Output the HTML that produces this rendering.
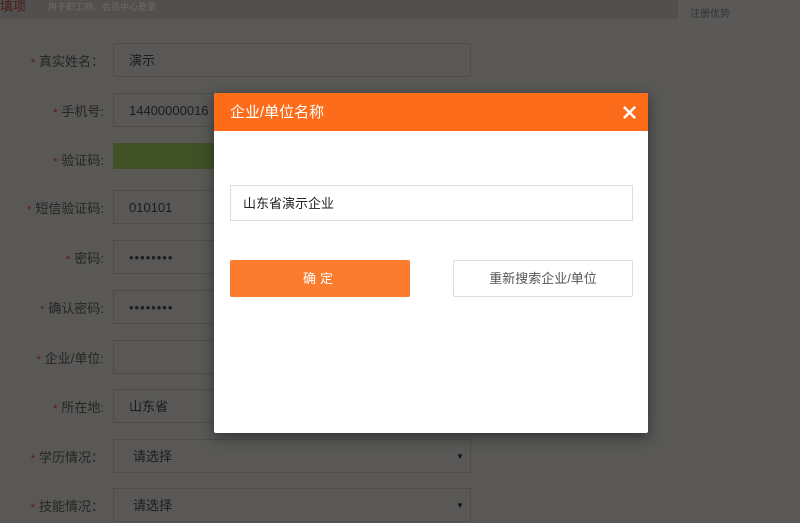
<!DOCTYPE html>
<html><head><meta charset="utf-8"><style>
*{margin:0;padding:0;box-sizing:border-box}
body{width:800px;height:521px;overflow:hidden;background:#595856;font-family:"Liberation Sans","Noto Sans CJK SC",sans-serif;position:relative}
.top{position:absolute;left:0;top:0;width:678px;height:19px;background:#52504e}
.side{position:absolute;left:678px;top:0;width:122px;height:521px;background:#5b5957}
.side span{position:absolute;left:12px;top:5px;font-size:10px;color:#333}
.t1{position:absolute;left:0;top:-4px;font-size:13px;color:#4a1c1c}
.t2{position:absolute;left:48px;top:0;font-size:9px;color:#6e6c6a}
.lab{position:absolute;right:696px;font-size:13px;color:#262524;text-align:right;white-space:nowrap}
.lab b{color:#5a1a1a;font-weight:normal;margin-right:4px;font-size:11px}
.in{position:absolute;left:113px;width:358px;height:34px;border:1px solid #4e4c4a;font-size:13px;color:#1c1c1c;padding:0 0 0 15px;line-height:34px}
.in i{position:absolute;right:6px;top:0;font-style:normal;font-size:8px;color:#111}
.modal{position:absolute;left:214px;top:93px;width:434px;height:340px;background:#fff;box-shadow:0 4px 14px rgba(0,0,0,.45);border-radius:2px}
.hd{height:38px;background:#fd6c1a;color:#fff;font-size:15px;line-height:40px;padding-left:16px;position:relative;border-radius:2px 2px 0 0}
.x{position:absolute;right:11px;top:12px;width:15px;height:15px}
.mi{position:absolute;left:16px;top:92px;width:403px;height:36px;border:1px solid #ddd;font-size:13px;color:#222;line-height:36px;padding-left:12px}
.b1{position:absolute;left:16px;top:167px;width:180px;height:37px;background:#fc7c2f;border-radius:2px;color:#fff;font-size:13px;text-align:center;line-height:37px;letter-spacing:4px}
.b2{position:absolute;left:239px;top:167px;width:180px;height:37px;border:1px solid #ddd;border-radius:2px;color:#555;font-size:13px;text-align:center;line-height:35px}
</style></head><body>
<div class="top"><span class="t1">填项</span><span class="t2">用于职工网、会员中心登录</span></div>
<div class="side"><span>注册优势</span></div>
<div class="lab" style="top:51px"><b>*</b>真实姓名：</div><div class="in" style="top:43px">演示</div>
<div class="lab" style="top:101px"><b>*</b>手机号:</div><div class="in" style="top:93px">14400000016</div>
<div class="lab" style="top:150px"><b>*</b>验证码:</div><div class="in" style="top:143px;height:26px;background:#3f5125;border-color:#3f5125;width:110px"></div>
<div class="lab" style="top:198px"><b>*</b>短信验证码:</div><div class="in" style="top:190px">010101</div>
<div class="lab" style="top:248px"><b>*</b>密码:</div><div class="in" style="top:240px;letter-spacing:1px">••••••••</div>
<div class="lab" style="top:298px"><b>*</b>确认密码:</div><div class="in" style="top:290px;letter-spacing:1px">••••••••</div>
<div class="lab" style="top:348px"><b>*</b>企业/单位:</div><div class="in" style="top:340px"></div>
<div class="lab" style="top:397px"><b>*</b>所在地:</div><div class="in" style="top:389px">山东省</div>
<div class="lab" style="top:447px"><b>*</b>学历情况：</div><div class="in" style="top:439px;padding-left:19px">请选择<i>▼</i></div>
<div class="lab" style="top:496px"><b>*</b>技能情况：</div><div class="in" style="top:488px;padding-left:19px">请选择<i>▼</i></div>
<div class="modal">
<div class="hd">企业/单位名称<svg class="x" viewBox="0 0 16 16"><path d="M2 2L14 14M14 2L2 14" stroke="#fff" stroke-width="2.6"/></svg></div>
<div class="mi">山东省演示企业</div>
<div class="b1">确定</div>
<div class="b2">重新搜索企业/单位</div>
</div>
</body></html>
